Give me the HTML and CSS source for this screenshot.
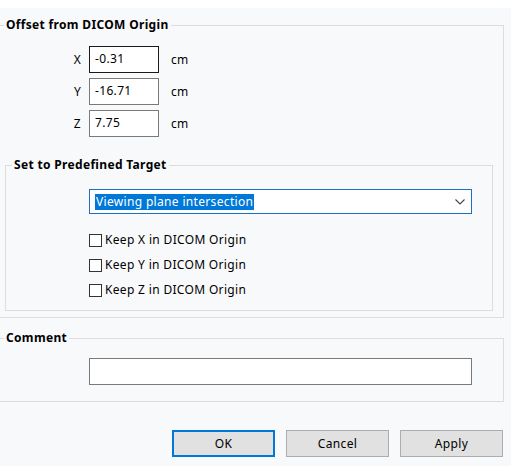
FILE: index.html
```html
<!DOCTYPE html>
<html>
<head>
<meta charset="utf-8">
<link rel="stylesheet" href="styles.css">
</head>
<body>
<div class="topband"></div>
<div class="dialog">
  <fieldset class="group group-offset">
    <legend class="group-title">Offset from DICOM Origin</legend>
    <div class="coords">
      <span class="axis">X</span><div class="field field-focus">-0.31</div><span class="unit">cm</span>
      <span class="axis">Y</span><div class="field">-16.71</div><span class="unit">cm</span>
      <span class="axis">Z</span><div class="field">7.75</div><span class="unit">cm</span>
    </div>
    <fieldset class="group group-target">
      <legend class="group-title">Set to Predefined Target</legend>
      <div class="combo">
        <span class="combo-value">Viewing plane intersection</span>
        <svg class="chevron" width="10" height="6" viewBox="0 0 10 6"><path d="M0.5 0.5 L5 5 L9.5 0.5" fill="none" stroke="#444" stroke-width="1.1"/></svg>
      </div>
      <div class="checks">
        <label class="check"><span class="box"></span>Keep X in DICOM Origin</label>
        <label class="check"><span class="box"></span>Keep Y in DICOM Origin</label>
        <label class="check"><span class="box"></span>Keep Z in DICOM Origin</label>
      </div>
    </fieldset>
  </fieldset>
  <fieldset class="group group-comment">
    <legend class="group-title">Comment</legend>
    <div class="comment-field"></div>
  </fieldset>
  <div class="buttons">
    <div class="btn btn-default">OK</div>
    <div class="btn">Cancel</div>
    <div class="btn">Apply</div>
  </div>
</div>
</body>
</html>
```
FILE: styles.css
```css
html, body {
  margin: 0;
  padding: 0;
}
body {
  background: #f8f9fb;
  font-family: "Noto Sans", "Open Sans", sans-serif;
  font-size: 12px;
  letter-spacing: 0.33px;
  color: #000;
  width: 511px;
  height: 466px;
  overflow: hidden;
}
.topband {
  height: 8px;
  background: #ffffff;
}
.dialog {
  display: flex;
  flex-direction: column;
}
.group {
  border: 1px solid #dcdddf;
  padding: 0;
  min-width: 0;
}
.group-title {
  font-weight: bold;
  line-height: 16px;
  padding: 0 2px;
  margin-left: 4px;
  color: #000;
}
.group-offset {
  margin: 9px 7px 0 -1px;
  padding-bottom: 6px;
}
.coords {
  display: grid;
  grid-template-columns: 85px 70px auto;
  grid-auto-rows: 27px;
  row-gap: 5px;
  column-gap: 0;
  margin-top: 13px;
  align-items: center;
}
.axis {
  text-align: right;
  padding-right: 4px;
  line-height: 16px;
}
.field {
  box-sizing: border-box;
  height: 27px;
  border: 1px solid #7a7a7a;
  background: #fff;
  padding: 4px 0 0 5px;
  line-height: 16px;
  margin-left: 4px;
  width: 70px;
}
.field-focus {
  border-color: #1a1a1a;
}
.unit {
  padding-left: 12px;
  margin-left: 4px;
}
.group-target {
  margin: 20px 10px 0 5px;
  padding-bottom: 12px;
}
.group-target .group-title {
  margin-left: 6px;
}
.combo {
  box-sizing: border-box;
  margin: 16px 0 0 83px;
  width: 383px;
  height: 25px;
  border: 1px solid #1c6fc4;
  background: #fff;
  display: flex;
  align-items: center;
  justify-content: space-between;
  padding: 0 6px 0 5px;
}
.combo-value {
  background: #0078d7;
  color: #fff;
  line-height: 16px;
  padding: 0 1px;
}
.chevron {
  display: block;
}
.checks {
  display: flex;
  flex-direction: column;
  gap: 9px;
  margin: 18px 0 0 83px;
}
.check {
  display: flex;
  align-items: center;
  line-height: 16px;
}
.box {
  box-sizing: border-box;
  width: 13px;
  height: 13px;
  border: 1px solid #333;
  background: #fff;
  margin-right: 3px;
}
.group-comment {
  margin: 12px 7px 0 -1px;
  padding-bottom: 16px;
}
.comment-field {
  box-sizing: border-box;
  margin: 12px 0 0 89px;
  width: 383px;
  height: 27px;
  border: 1px solid #7a7a7a;
  background: #fff;
}
.buttons {
  display: flex;
  justify-content: flex-end;
  gap: 11px;
  margin: 28px 8px 0 0;
}
.btn {
  box-sizing: border-box;
  width: 103px;
  height: 27px;
  background: #e1e1e1;
  border: 1px solid #adadad;
  display: flex;
  align-items: center;
  justify-content: center;
}
.btn-default {
  border: 2px solid #0078d7;
}
```
